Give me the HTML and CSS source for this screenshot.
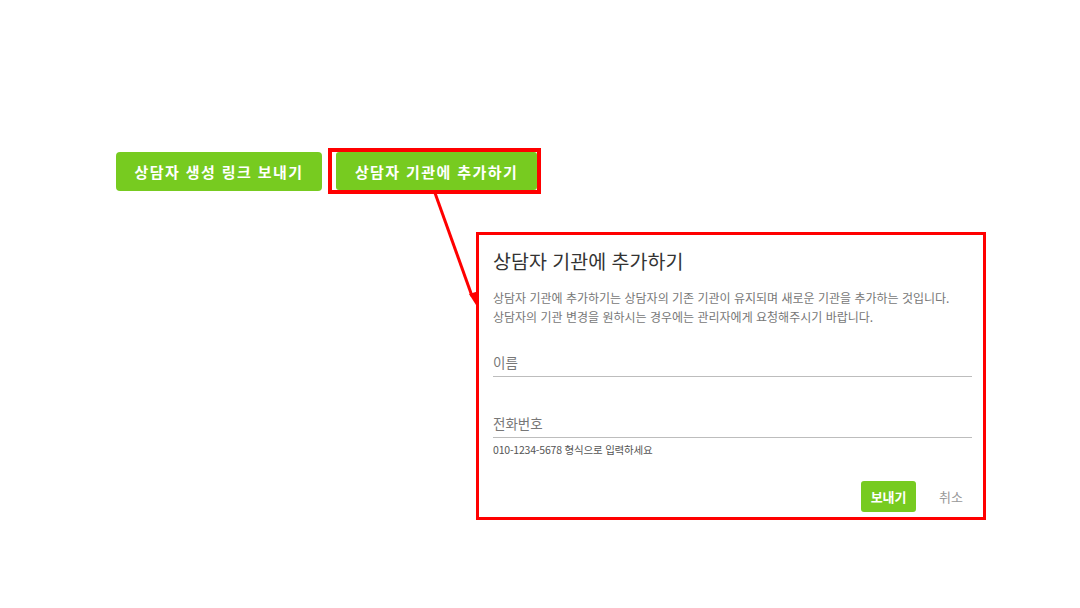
FILE: index.html
```html
<!DOCTYPE html>
<html lang="ko">
<head>
  <meta charset="UTF-8" />
  <meta name="viewport" content="width=device-width, initial-scale=1.0"/>
  <title>상담자 기관에 추가하기</title>
  <link rel="stylesheet" href="styles.css">
</head>
<body>
  <div class="page">
    <div class="actions-top">
      <button class="btn-green">상담자 생성 링크 보내기</button>
      <span class="mark">
        <button class="btn-green btn-marked">상담자 기관에 추가하기</button>
      </span>
    </div>

    <div class="dialog">
      <h2>상담자 기관에 추가하기</h2>
      <p class="desc">상담자 기관에 추가하기는 상담자의 기존 기관이 유지되며 새로운 기관을 추가하는 것입니다.<br>상담자의 기관 변경을 원하시는 경우에는 관리자에게 요청해주시기 바랍니다.</p>

      <div class="field">
        <input type="text" placeholder="이름">
      </div>
      <div class="field field-phone">
        <input type="text" placeholder="전화번호">
      </div>
      <p class="hint">010-1234-5678 형식으로 입력하세요</p>

      <div class="dialog-actions">
        <button class="btn-send">보내기</button>
        <button class="btn-cancel">취소</button>
      </div>
    </div>

    <svg class="arrow" width="1080" height="608" viewBox="0 0 1080 608">
      <line x1="435" y1="193" x2="472" y2="296" stroke="#ff0000" stroke-width="3"/>
      <polygon points="476,305 469,294 479,291" fill="#ff0000"/>
    </svg>
  </div>
</body>
</html>
```

FILE: styles.css
```css
body {
  margin: 0;
  background: #ffffff;
  font-family: "Noto Sans CJK KR", "Noto Sans", sans-serif;
  color: #333;
}
.page {
  position: relative;
  width: 1080px;
  height: 608px;
  padding: 148px 0 0 116px;
  box-sizing: border-box;
}
.actions-top {
  display: flex;
  align-items: center;
  gap: 6px;
}
button {
  font-family: inherit;
  border: none;
  cursor: pointer;
}
.btn-green {
  width: 206px;
  height: 39px;
  background: #77cb20;
  color: #fff;
  font-size: 15px;
  font-weight: bold;
  letter-spacing: 1.4px;
  border-radius: 4px;
  padding: 0;
}
.mark {
  display: flex;
  border: 4px solid #ff0000;
  padding-left: 4px;
}
.btn-marked {
  width: 201px;
  height: 38px;
  border-radius: 3px;
}
.dialog {
  width: 510px;
  box-sizing: border-box;
  margin: 38px 0 0 360px;
  border: 3px solid #ff0000;
  padding: 13px 11px 5px 14px;
  background: #fff;
}
.dialog h2 {
  margin: 0;
  font-size: 19.5px;
  line-height: 26px;
  font-weight: normal;
  color: #333;
}
.desc {
  margin: 14px 0 0;
  font-size: 12px;
  line-height: 19px;
  color: #777;
}
.field {
  margin-top: 26px;
  border-bottom: 1px solid #bdbdbd;
  padding-bottom: 4px;
}
.field-phone {
  margin-top: 36px;
}
.field input {
  display: block;
  width: 100%;
  border: none;
  outline: none;
  padding: 0;
  height: 20px;
  font-family: inherit;
  font-size: 13.5px;
  color: #333;
  background: transparent;
}
.field input::placeholder {
  color: #777;
}
.hint {
  margin: 4px 0 0;
  font-size: 10.5px;
  line-height: 16px;
  color: #555;
  letter-spacing: -0.2px;
}
.dialog-actions {
  display: flex;
  justify-content: flex-end;
  align-items: center;
  gap: 14px;
  margin-top: 23px;
}
.btn-send {
  width: 55px;
  height: 31px;
  background: #77cb20;
  color: #fff;
  font-size: 13px;
  font-weight: bold;
  border-radius: 3px;
}
.btn-cancel {
  background: none;
  color: #999;
  font-size: 13px;
  padding: 0 9px;
  height: 31px;
}
.arrow {
  position: absolute;
  left: 0;
  top: 0;
  pointer-events: none;
}
```
